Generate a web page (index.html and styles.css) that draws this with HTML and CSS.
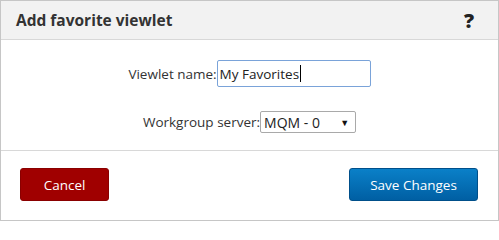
FILE: index.html
```html
<!DOCTYPE html>
<html>
<head>
<meta charset="utf-8">
<link rel="stylesheet" href="styles.css">
</head>
<body>
<div class="dialog">
  <div class="dialog-header">
    <h1 class="dialog-title">Add favorite viewlet</h1>
    <span class="help">?</span>
  </div>
  <div class="dialog-body">
    <div class="form-row row-name">
      <label class="form-label">Viewlet name:</label>
      <div class="textbox"><span class="textbox-value">My Favorites</span><span class="caret"></span></div>
    </div>
    <div class="form-row row-server">
      <label class="form-label">Workgroup server:</label>
      <div class="select"><span class="select-value">MQM - 0</span><span class="select-arrow">▼</span></div>
    </div>
  </div>
  <div class="dialog-footer">
    <button class="btn btn-cancel">Cancel</button>
    <button class="btn btn-save">Save Changes</button>
  </div>
</div>
</body>
</html>
```

FILE: styles.css
```css
* { box-sizing: border-box; }
html, body { margin: 0; padding: 0; background: #ffffff; }
body {
  font-family: "Open Sans", "Noto Sans", sans-serif;
  color: #333333;
  width: 499px;
  height: 221px;
  overflow: hidden;
}
.dialog {
  width: 499px;
  height: 221px;
  border: 1px solid #c6c6c6;
  display: flex;
  flex-direction: column;
  background: #ffffff;
}
.dialog-header {
  height: 39px;
  background: #f2f2f2;
  border-bottom: 1px solid #d8d8d8;
  display: flex;
  align-items: center;
  justify-content: space-between;
  padding: 0 24px 0 15px;
}
.dialog-title {
  margin: 0;
  font-size: 15.5px;
  font-weight: 700;
  color: #333333;
  letter-spacing: 0;
}
.help {
  font-size: 20px;
  font-weight: 800;
  color: #222222;
}
.dialog-body {
  height: 111px;
  border-bottom: 1px solid #d8d8d8;
  display: flex;
  flex-direction: column;
  align-items: center;
  padding-top: 20px;
}
.form-row {
  display: flex;
  align-items: center;
  font-size: 13.5px;
  color: #333333;
}
.row-server { margin-top: 24px; }
.textbox {
  width: 154px;
  height: 27px;
  border: 1px solid #7aa3d9;
  border-radius: 2px;
  display: flex;
  align-items: center;
  padding-left: 2px;
  color: #222222;
}
.caret {
  display: inline-block;
  width: 1px;
  height: 17px;
  background: #000000;
  margin-left: 1px;
}
.select {
  width: 96px;
  height: 22px;
  border: 1px solid #a9a9a9;
  border-radius: 2px;
  display: flex;
  align-items: center;
  justify-content: space-between;
  padding: 0 6px 0 3px;
  color: #222222;
  font-size: 14px;
}
.select-arrow {
  font-size: 9px;
  color: #111111;
}
.dialog-footer {
  flex: 1;
  display: flex;
  justify-content: space-between;
  align-items: flex-start;
  padding: 17px 20px 0 19px;
}
.btn {
  height: 33px;
  border-radius: 3px;
  font-family: "Open Sans", "Noto Sans", sans-serif;
  font-size: 13.5px;
  color: #ffffff;
  cursor: pointer;
}
.btn-cancel {
  width: 89px;
  background: #a00000;
  border: 1px solid #8a0000;
}
.btn-save {
  width: 129px;
  background: linear-gradient(#0a80c8, #005fa3);
  border: 1px solid #004f8a;
}
```
